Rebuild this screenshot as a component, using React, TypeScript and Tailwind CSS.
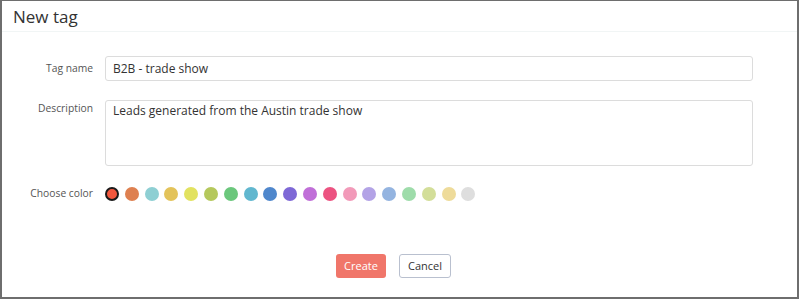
const COLORS = [
  "#f2583e",
  "#de8050",
  "#8ecfd3",
  "#e3c35a",
  "#e2e260",
  "#b5c85c",
  "#6bc77c",
  "#61b7cf",
  "#4f87cc",
  "#7e68d6",
  "#c06fd8",
  "#ec5381",
  "#f29ab9",
  "#b3a3e6",
  "#94b4e0",
  "#9edcaa",
  "#d3de99",
  "#eedb9a",
  "#dedede",
];

export default function App() {
  return (
    <div className="w-[799px] h-[300px] bg-white font-['Open_Sans',sans-serif] text-[#333]">
      <div className="h-[299px] border-2 border-t border-[#6e6e6e] flex flex-col">
        {/* Header */}
        <div className="h-[31px] border-b border-[#f1f5f5] pl-[11px] flex items-center">
          <h2 className="text-[17px] text-[#333] leading-none">New tag</h2>
        </div>

        {/* Form */}
        <div className="flex flex-col pt-[24px]">
          <div className="flex items-center h-[25px]">
            <label className="w-[91px] text-right text-[10.3px] text-[#555]">Tag name</label>
            <input
              defaultValue="B2B - trade show"
              className="ml-[12px] w-[648px] h-[25px] border border-[#dcdcdc] rounded-[3px] px-[7px] text-[12px] text-[#333] outline-none"
            />
          </div>

          <div className="flex items-start mt-[19px]">
            <label className="w-[91px] text-right text-[10.3px] text-[#555] pt-[1px]">Description</label>
            <textarea
              defaultValue="Leads generated from the Austin trade show"
              className="ml-[12px] w-[648px] h-[66px] border border-[#dcdcdc] rounded-[3px] px-[7px] pt-[1px] text-[12px] text-[#333] outline-none resize-none"
            />
          </div>

          <div className="flex items-center mt-[20px] h-[16px]">
            <label className="w-[91px] text-right text-[10.3px] text-[#555]">Choose color</label>
            <div className="ml-[12px] flex gap-[5.8px]">
              {COLORS.map((c, i) => (
                <span
                  key={c}
                  className={
                    i === 0
                      ? "w-[14px] h-[14px] rounded-full border-[2.5px] border-[#1a1a1a]"
                      : "w-[14px] h-[14px] rounded-full"
                  }
                  style={{ backgroundColor: c }}
                />
              ))}
            </div>
          </div>
        </div>

        {/* Actions */}
        <div className="flex justify-center gap-[13px] mt-[52px] ml-[-12px]">
          <button className="w-[50px] h-[24px] rounded-[3px] bg-[#f0766a] text-white text-[11px]">Create</button>
          <button className="w-[52px] h-[24px] rounded-[3px] border border-[#b9c0cf] bg-white text-[#333] text-[11px]">
            Cancel
          </button>
        </div>
      </div>
    </div>
  );
}
